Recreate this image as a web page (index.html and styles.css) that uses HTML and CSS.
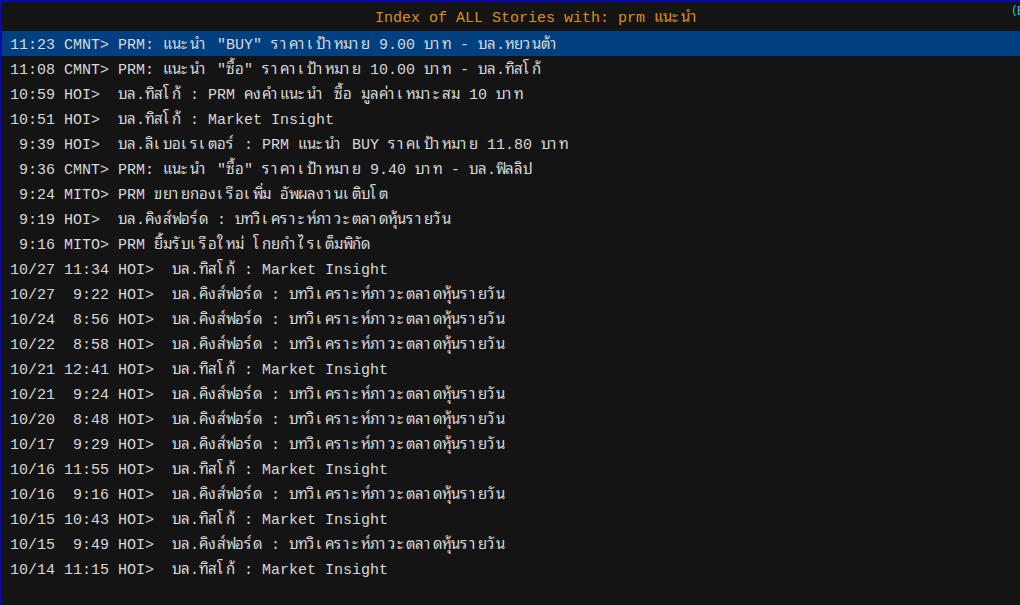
FILE: index.html
```html
<!DOCTYPE html>
<html lang="th">
<head>
<meta charset="utf-8">
<title>Index of ALL Stories</title>
<link rel="stylesheet" href="styles.css">
</head>
<body>
<div class="screen">
  <div class="titlebar">
    <div class="title cells">Index of ALL Stories with: prm แนะนำ</div>
    <div class="corner">(E</div>
  </div>
  <div class="list">
    <div class="row selected cells">11:23 CMNT&gt; PRM: แนะนำ "BUY" ราคาเป้าหมาย 9.00 บาท - บล.หยวนต้า</div>
    <div class="row cells">11:08 CMNT&gt; PRM: แนะนำ "ซื้อ" ราคาเป้าหมาย 10.00 บาท - บล.ทิสโก้</div>
    <div class="row cells">10:59 HOI&gt;  บล.ทิสโก้ : PRM คงคำแนะนำ ซื้อ มูลค่าเหมาะสม 10 บาท</div>
    <div class="row cells">10:51 HOI&gt;  บล.ทิสโก้ : Market Insight</div>
    <div class="row cells"> 9:39 HOI&gt;  บล.ลิเบอเรเตอร์ : PRM แนะนำ BUY ราคเป้าหมาย 11.80 บาท</div>
    <div class="row cells"> 9:36 CMNT&gt; PRM: แนะนำ "ซื้อ" ราคาเป้าหมาย 9.40 บาท - บล.ฟิลลิป</div>
    <div class="row cells"> 9:24 MITO&gt; PRM ขยายกองเรือเพิ่ม อัพผลงานเติบโต</div>
    <div class="row cells"> 9:19 HOI&gt;  บล.คิงส์ฟอร์ด : บทวิเคราะห์ภาวะตลาดหุ้นรายวัน</div>
    <div class="row cells"> 9:16 MITO&gt; PRM ยิ้มรับเรือใหม่ โกยกำไรเต็มพิกัด</div>
    <div class="row cells">10/27 11:34 HOI&gt;  บล.ทิสโก้ : Market Insight</div>
    <div class="row cells">10/27  9:22 HOI&gt;  บล.คิงส์ฟอร์ด : บทวิเคราะห์ภาวะตลาดหุ้นรายวัน</div>
    <div class="row cells">10/24  8:56 HOI&gt;  บล.คิงส์ฟอร์ด : บทวิเคราะห์ภาวะตลาดหุ้นรายวัน</div>
    <div class="row cells">10/22  8:58 HOI&gt;  บล.คิงส์ฟอร์ด : บทวิเคราะห์ภาวะตลาดหุ้นรายวัน</div>
    <div class="row cells">10/21 12:41 HOI&gt;  บล.ทิสโก้ : Market Insight</div>
    <div class="row cells">10/21  9:24 HOI&gt;  บล.คิงส์ฟอร์ด : บทวิเคราะห์ภาวะตลาดหุ้นรายวัน</div>
    <div class="row cells">10/20  8:48 HOI&gt;  บล.คิงส์ฟอร์ด : บทวิเคราะห์ภาวะตลาดหุ้นรายวัน</div>
    <div class="row cells">10/17  9:29 HOI&gt;  บล.คิงส์ฟอร์ด : บทวิเคราะห์ภาวะตลาดหุ้นรายวัน</div>
    <div class="row cells">10/16 11:55 HOI&gt;  บล.ทิสโก้ : Market Insight</div>
    <div class="row cells">10/16  9:16 HOI&gt;  บล.คิงส์ฟอร์ด : บทวิเคราะห์ภาวะตลาดหุ้นรายวัน</div>
    <div class="row cells">10/15 10:43 HOI&gt;  บล.ทิสโก้ : Market Insight</div>
    <div class="row cells">10/15  9:49 HOI&gt;  บล.คิงส์ฟอร์ด : บทวิเคราะห์ภาวะตลาดหุ้นรายวัน</div>
    <div class="row cells">10/14 11:15 HOI&gt;  บล.ทิสโก้ : Market Insight</div>
  </div>
</div>
<script src="script.js"></script>
</body>
</html>
```

FILE: styles.css
```css
html, body {
  margin: 0;
  padding: 0;
  height: 100%;
  overflow: hidden;
  background: #141414;
}

.screen {
  box-sizing: border-box;
  height: 605px;
  width: 1020px;
  border-top: 2px solid #0a0aa8;
  border-left: 2px solid #0a0aa8;
  background: #141414;
  font-family: "Liberation Mono", "Noto Sans Thai Looped", "Tlwg Mono", "Tlwg Typo", "Loma", "Garuda", "Waree", "Noto Sans Thai", monospace;
  font-size: 15px;
  color: #d8d8d8;
  overflow: hidden;
}

.titlebar {
  display: flex;
  height: 29px;
  align-items: flex-start;
}

.title {
  padding-left: 373px;
  line-height: 25px;
  padding-top: 4px;
  color: #d8921c;
  white-space: pre;
}

.corner {
  margin-left: auto;
  width: 8px;
  overflow: hidden;
  white-space: nowrap;
  font-family: "DejaVu Sans", sans-serif;
  font-size: 12px;
  line-height: 12px;
  padding-top: 3px;
  color: #1ec8d2;
}

.list {
  display: flex;
  flex-direction: column;
}

.row {
  height: 23px;
  padding-top: 2px;
  line-height: 25px;
  padding-left: 8px;
  white-space: pre;
  overflow: visible;
}

.row.selected {
  background: #004080;
}

.cell {
  display: inline-block;
  width: 9px;
  white-space: pre;
}
```

FILE: script.js
```js
(function () {
  var mark = /[\u0E31\u0E34-\u0E3A\u0E47-\u0E4E]/;
  document.querySelectorAll('.cells').forEach(function (el) {
    var text = el.textContent;
    var cells = [];
    for (var ch of text) {
      if (mark.test(ch) && cells.length) {
        cells[cells.length - 1] += ch;
      } else {
        cells.push(ch);
      }
    }
    el.textContent = '';
    var frag = document.createDocumentFragment();
    cells.forEach(function (c) {
      var s = document.createElement('span');
      s.className = 'cell';
      s.textContent = c;
      frag.appendChild(s);
    });
    el.appendChild(frag);
  });
})();
```
